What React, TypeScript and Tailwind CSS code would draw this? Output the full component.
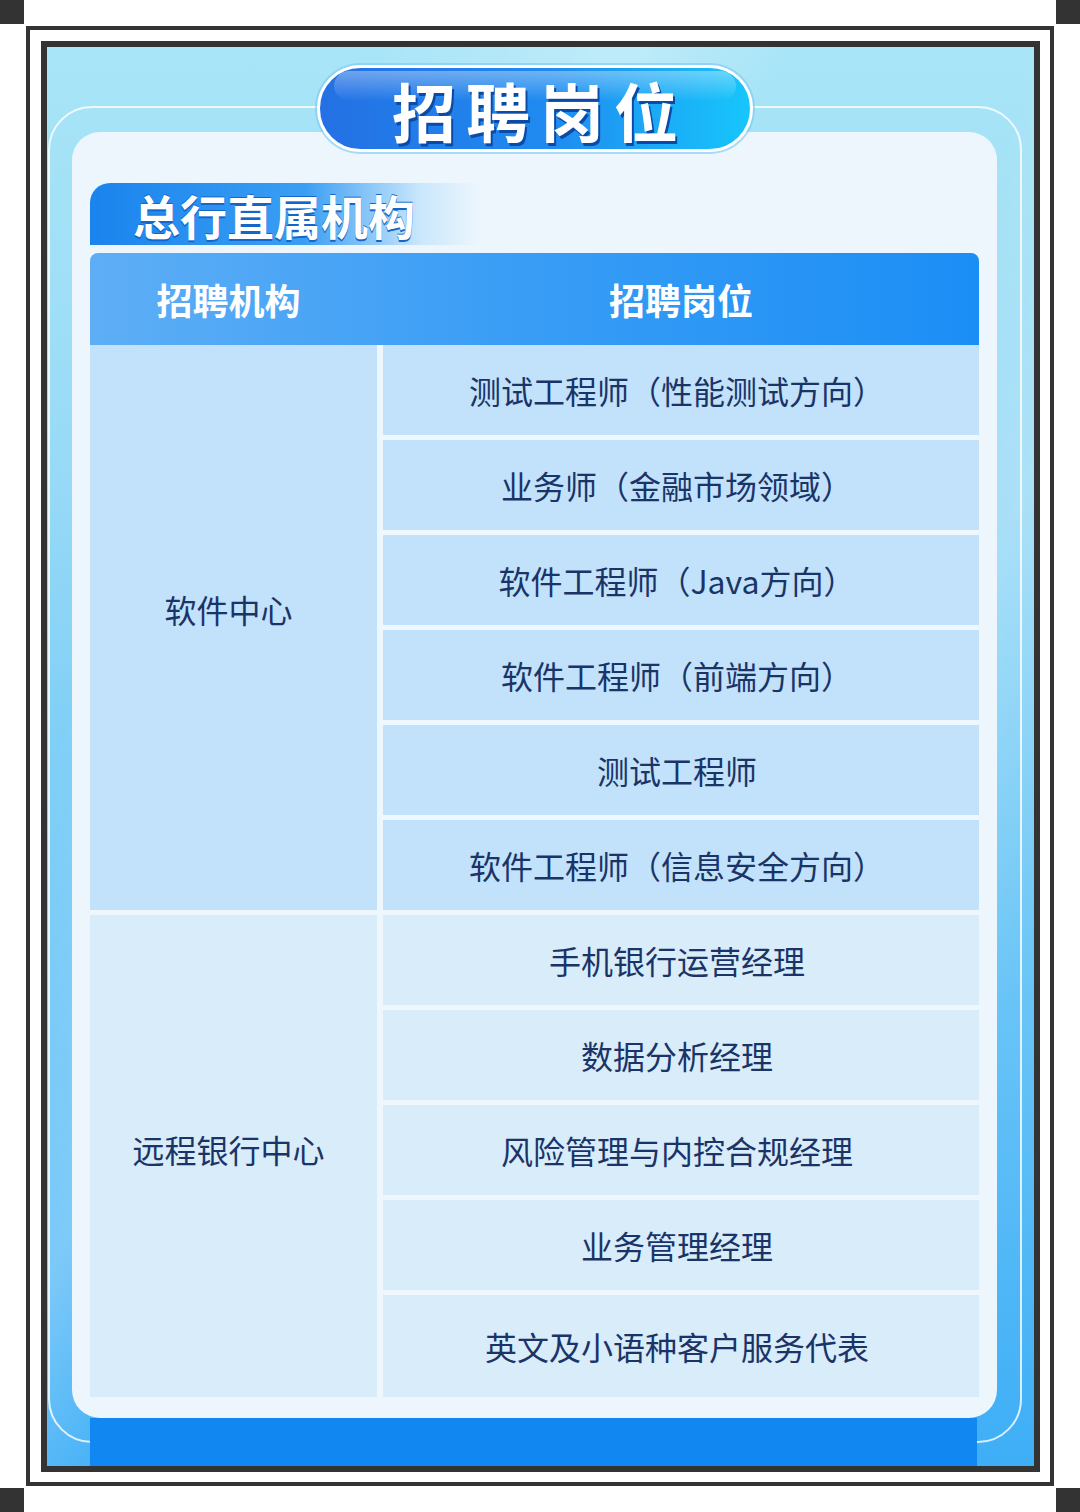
const FONT = '"Noto Sans CJK SC", "Noto Sans", sans-serif';

const softwareJobs = [
  '测试工程师（性能测试方向）',
  '业务师（金融市场领域）',
  '软件工程师（Java方向）',
  '软件工程师（前端方向）',
  '测试工程师',
  '软件工程师（信息安全方向）',
];

const remoteJobs = [
  '手机银行运营经理',
  '数据分析经理',
  '风险管理与内控合规经理',
  '业务管理经理',
  '英文及小语种客户服务代表',
];

function Corner() {
  return <div className="w-[24px] h-[24px] bg-[#333]" />;
}

function JobCell({ text, tint, tall }: { text: string; tint: string; tall?: boolean }) {
  return (
    <div
      className={`flex items-center justify-center pr-[8px] text-[32px] text-[#1b3468] ${tint} ${
        tall ? 'h-[102px]' : 'h-[90px]'
      }`}
    >
      {text}
    </div>
  );
}

function Group({
  name,
  jobs,
  tint,
  first,
}: {
  name: string;
  jobs: string[];
  tint: string;
  first?: boolean;
}) {
  return (
    <div className="flex gap-[6px]">
      <div
        className={`w-[287px] flex items-center justify-center pr-[10px] text-[32px] text-[#1b3468] ${tint} ${
          first ? 'pb-[38px]' : 'pb-[14px]'
        }`}
      >
        {name}
      </div>
      <div className="flex-1 flex flex-col gap-[5px]">
        {jobs.map((j, i) => (
          <JobCell key={j} text={j} tint={tint} tall={!first && i === jobs.length - 1} />
        ))}
      </div>
    </div>
  );
}

export default function App() {
  return (
    <div className="w-[1080px] h-[1512px] bg-white flex flex-col" style={{ fontFamily: FONT }}>
      <div className="h-[26px] flex justify-between items-start">
        <Corner />
        <Corner />
      </div>

      {/* photo frame */}
      <div className="mx-[26px] h-[1460px] border-[4px] border-[#333] pt-[11px] pl-[11px] pr-[10px]">
        <div className="h-[1431px] border-[6px] border-[#333]">
          <div className="relative h-full overflow-hidden bg-[linear-gradient(180deg,#a9e5f7_0%,#98daf6_30%,#6cc6f6_65%,#3eaef6_100%)] flex flex-col">
            {/* light rays */}
            <div className="absolute inset-0 bg-[linear-gradient(115deg,transparent_20%,rgba(255,255,255,0.25)_35%,transparent_45%,transparent_60%,rgba(255,255,255,0.2)_72%,transparent_85%)]" />
            {/* outline ring */}
            <div className="absolute left-[1px] top-[59px] w-[974px] h-[1337px] rounded-[44px] border-[2px] border-white/80" />

            {/* title pill */}
            <div className="relative z-10 mt-[18px] ml-[270px] w-[436px] h-[87px] rounded-full border-[3px] border-white shadow-[0_0_0_2px_rgba(120,200,245,0.6)] bg-[linear-gradient(90deg,#2470e4_0%,#1f8cf0_55%,#17c6fb_100%)] flex items-center justify-center">
              <div className="absolute left-[14px] right-[14px] top-[3px] h-[30px] rounded-full bg-[linear-gradient(180deg,rgba(255,255,255,0.35),rgba(255,255,255,0))]" />
              <span className="relative text-[64px] leading-[80px] font-bold tracking-[10px] pl-[10px] text-white [text-shadow:2px_3px_0_#0c4aa8]">
                招聘岗位
              </span>
            </div>

            {/* white panel */}
            <div className="relative mt-[-20px] ml-[25px] w-[925px] h-[1286px] rounded-[28px] bg-[#edf6fd] pt-[51px] px-[18px]">
              <div className="w-[390px] h-[62px] rounded-tl-[20px] bg-[linear-gradient(90deg,#1a84ee_0%,#3a9ef3_55%,rgba(150,210,250,0.4)_85%,rgba(237,246,253,0)_100%)] flex items-center pl-[43px]">
                <span className="text-[47px] leading-none font-bold text-white [text-shadow:0_2px_0_#1466c8,0_-1px_0_#1466c8]">
                  总行直属机构
                </span>
              </div>

              <div className="mt-[8px] flex flex-col gap-[5px] bg-[#eef7fe]">
                <div className="flex h-[92px] rounded-t-[8px] bg-[linear-gradient(90deg,#5eaef5_0%,#3b9ef5_45%,#1b8ef5_100%)] text-[36px] font-bold text-white">
                  <div className="w-[287px] flex items-center justify-center pr-[10px]">招聘机构</div>
                  <div className="flex-1 flex items-center justify-center pl-[6px]">招聘岗位</div>
                </div>
                <div className="mt-[-5px]">
                  <Group name="软件中心" jobs={softwareJobs} tint="bg-[#c1e2fa]" first />
                </div>
                <Group name="远程银行中心" jobs={remoteJobs} tint="bg-[#d8ecfa]" />
              </div>
            </div>

            {/* bottom band */}
            <div className="relative ml-[43px] mr-[57px] flex-1 bg-[#1188f1]" />
          </div>
        </div>
      </div>

      <div className="h-[26px] flex justify-between items-end">
        <Corner />
        <Corner />
      </div>
    </div>
  );
}
